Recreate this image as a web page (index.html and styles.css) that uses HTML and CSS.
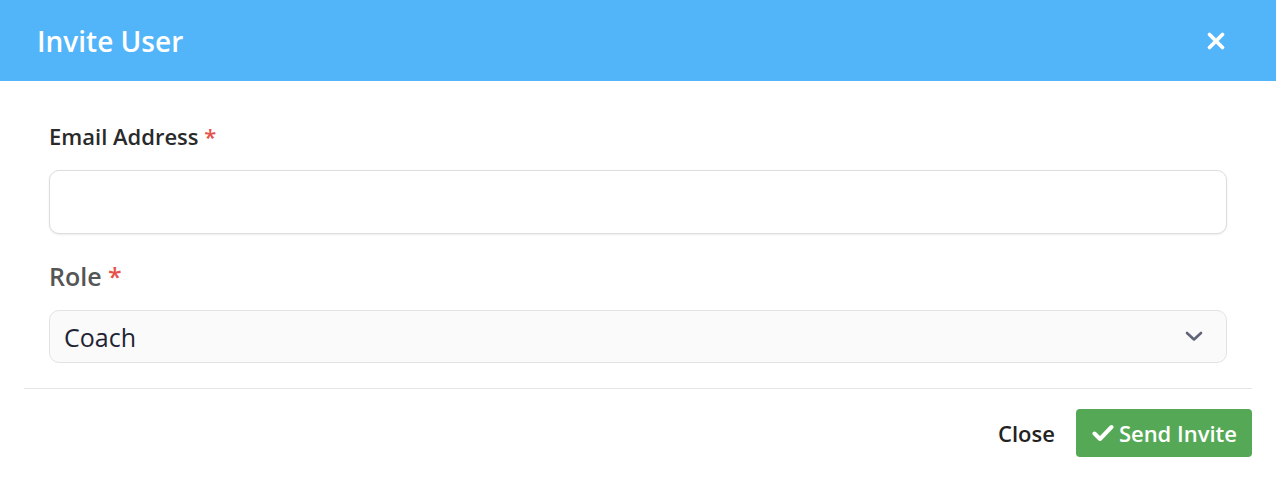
FILE: index.html
```html
<!DOCTYPE html>
<html lang="en">
<head>
  <meta charset="UTF-8">
  <meta name="viewport" content="width=device-width, initial-scale=1.0">
  <title>Invite User</title>
  <link rel="stylesheet" href="styles.css">
</head>
<body>
  <div class="modal">
    <div class="modal-header">
      <h1>Invite User</h1>
      <button class="close-x" type="button" aria-label="Close">
        <svg width="20" height="20" viewBox="0 0 20 20">
          <path d="M3.5 3.5 L16.5 16.5 M16.5 3.5 L3.5 16.5" stroke="#fff" stroke-width="3.8" stroke-linecap="round"/>
        </svg>
      </button>
    </div>

    <form class="modal-body">
      <div class="form-group">
        <label class="label-email" for="email">Email Address <span class="req">*</span></label>
        <input type="email" id="email" name="email">
      </div>

      <div class="form-group">
        <label class="label-role" for="role">Role <span class="req">*</span></label>
        <div class="select-wrap">
          <select id="role" name="role">
            <option>Coach</option>
            <option>Athlete</option>
            <option>Admin</option>
          </select>
          <svg class="chevron" width="18" height="12" viewBox="0 0 18 12">
            <path d="M2 3 L9 9.5 L16 3" fill="none" stroke="#5f6577" stroke-width="2.6" stroke-linecap="round" stroke-linejoin="round"/>
          </svg>
        </div>
      </div>
    </form>

    <div class="modal-footer">
      <button class="btn-link" type="button">Close</button>
      <button class="btn-send" type="submit">
        <svg width="22" height="18" viewBox="0 0 22 18">
          <path d="M2.5 9.5 L8 15 L19.5 3" fill="none" stroke="#fff" stroke-width="4" stroke-linecap="round" stroke-linejoin="round"/>
        </svg>
        Send Invite
      </button>
    </div>
  </div>
</body>
</html>
```

FILE: styles.css
```css
body {
  margin: 0;
  font-family: "Open Sans", "Noto Sans", sans-serif;
  background: #fff;
  color: #222;
}
.modal-header {
  height: 81px;
  background-color: #52b4f9;
  display: flex;
  align-items: center;
  justify-content: space-between;
  padding: 0 50px 0 37px;
}
.modal-header h1 {
  margin: 0;
  color: #fff;
  font-size: 28px;
  font-weight: 600;
}
.close-x {
  background: none;
  border: none;
  padding: 0;
  display: flex;
  cursor: pointer;
}
.modal-body {
  padding: 41px 49px 25px;
}
.form-group {
  margin-bottom: 26px;
}
.form-group:last-child {
  margin-bottom: 0;
}
.label-email {
  display: block;
  font-size: 22px;
  font-weight: 600;
  color: #2a2a2a;
  line-height: 28px;
  margin-bottom: 20px;
}
.label-role {
  display: block;
  font-size: 25px;
  font-weight: 600;
  color: #555;
  line-height: 32px;
  margin-bottom: 18px;
}
.req {
  color: #e5534b;
}
input {
  display: block;
  box-sizing: border-box;
  width: 100%;
  height: 64px;
  border: 1px solid #ddd;
  border-radius: 10px;
  box-shadow: 0 1px 2px rgba(0, 0, 0, 0.08);
  font-family: inherit;
  font-size: 20px;
  padding: 0 14px;
}
.select-wrap {
  position: relative;
}
select {
  display: block;
  box-sizing: border-box;
  width: 100%;
  height: 53px;
  border: 1px solid #e3e3e3;
  border-radius: 10px;
  background: #fafafa;
  appearance: none;
  font-family: inherit;
  font-size: 25px;
  color: #1f2433;
  padding: 0 14px;
}
.chevron {
  position: absolute;
  right: 24px;
  top: 20px;
  pointer-events: none;
}
.modal-footer {
  margin: 0 24px;
  border-top: 1px solid #e5e5e5;
  padding-top: 20px;
  display: flex;
  justify-content: flex-end;
  align-items: center;
  gap: 21px;
}
.btn-link {
  background: none;
  border: none;
  font-family: inherit;
  font-size: 22px;
  font-weight: 600;
  color: #222;
  padding: 0;
  cursor: pointer;
}
.btn-send {
  display: flex;
  align-items: center;
  gap: 5px;
  height: 48px;
  padding: 0 15px 0 16px;
  background-color: #55a956;
  color: #fff;
  border: none;
  border-radius: 4px;
  font-family: inherit;
  font-size: 22px;
  font-weight: 600;
  cursor: pointer;
}
```
